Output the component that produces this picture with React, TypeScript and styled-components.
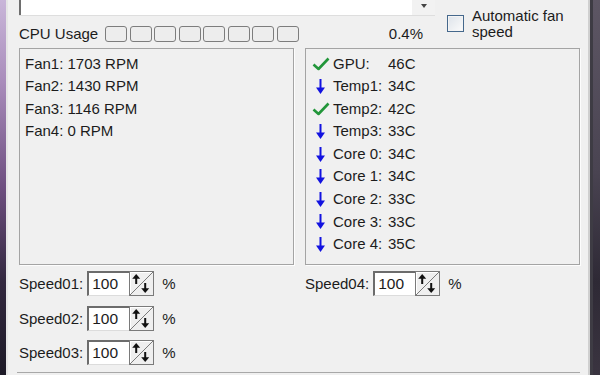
import styled, { createGlobalStyle } from "styled-components";

const GlobalStyle = createGlobalStyle`
  html, body {
    margin: 0;
    padding: 0;
  }
  body {
    width: 600px;
    height: 375px;
    overflow: hidden;
    background: #2a2432;
    font-family: "Liberation Sans", Arial, sans-serif;
    font-size: 15px;
    color: #1c1c1c;
  }
`

const Screen = styled.div`
  display: flex;
  width: 600px;
  height: 375px;
  overflow: hidden;
`
const DesktopLeft = styled.div`
  width: 6px;
  flex: none;
  background: linear-gradient(to bottom, #c9b6d9 0%, #a98cbb 22%, #6e4f80 50%, #33283f 75%, #1d1a27 100%);
`
const DesktopRight = styled.div`
  width: 12px;
  flex: none;
  background:
    linear-gradient(to right, #cfcfcf 0 2px, #3e3c44 2px 5px, transparent 5px),
    linear-gradient(to bottom, #5d5664 0%, #4a4452 45%, #2e2935 75%, #3a3440 100%);
`
const Window = styled.main`
  flex: 1;
  background: #f0f0f0;
  border-left: 2px solid #e6e6e6;
  padding: 0 8px 0 11px;
  box-sizing: border-box;
  display: flex;
  flex-direction: column;
  & > * {
    flex-shrink: 0;
  }
`
const TopArea = styled.section`
  display: grid;
  grid-template-columns: 416px 1fr;
  column-gap: 12px;
`
const LeftTop = styled.div`
  display: flex;
  flex-direction: column;
`
const Combo = styled.div`
  display: flex;
  height: 16px;
  border-bottom: 1px solid #dedede;
  box-sizing: border-box;
`
const ComboField = styled.div`
  flex: 1;
  background: #fff;
  border-left: 2px solid #6e6e6e;
`
const DropButton = styled.div`
  width: 23px;
  background: #f2f2f2;
  display: flex;
  justify-content: center;
  padding-top: 4px;
  box-sizing: border-box;
  &::after {
    content: "";
    width: 0;
    height: 0;
    border-left: 3.5px solid transparent;
    border-right: 3.5px solid transparent;
    border-top: 4px solid #444;
  }
`
const CpuRow = styled.div`
  display: flex;
  align-items: center;
  height: 16px;
  margin-top: 10px;
  line-height: 16px;
`
const Segments = styled.div`
  display: flex;
  gap: 2.5px;
  margin-left: 7px;
  height: 16px;
`
const Segment = styled.span`
  width: 22px;
  height: 16px;
  box-sizing: border-box;
  border: 1.5px solid #7d7d7d;
  border-radius: 3px;
  background: #ededed;
`
const Percent = styled.span`
  margin-left: auto;
  margin-right: 12px;
`
const AutoFan = styled.label`
  display: flex;
  align-items: center;
  gap: 8px;
  padding-top: 5px;
  line-height: 16px;
`
const CheckBox = styled.span`
  width: 17px;
  height: 17px;
  flex: none;
  box-sizing: border-box;
  border: 1.5px solid #45688c;
  background: linear-gradient(135deg, #dde3ea, #fbfbfb);
  box-shadow: inset 0 0 0 1px #f4f4f4;
`
const Panels = styled.section`
  display: grid;
  grid-template-columns: 275px 275px;
  column-gap: 11px;
  margin-top: 6px;
  height: 217px;
`
const Panel = styled.div<{ $padLeft: number }>`
  border: 1px solid #a4a4a4;
  box-shadow: 1px 1px 0 #fdfdfd;
  box-sizing: border-box;
  padding: 3.5px 0 0 ${p => p.$padLeft}px;
  line-height: 22.6px;
`
const SensorRow = styled.div`
  display: flex;
  align-items: center;
  height: 22.6px;
`
const IconCell = styled.span`
  width: 21px;
  flex: none;
  display: flex;
  align-items: center;
`
const SensorName = styled.span`
  width: 55px;
  flex: none;
  white-space: pre;
`
const SpeedArea = styled.section`
  display: grid;
  grid-template-columns: 275px 275px;
  column-gap: 11px;
  margin-top: 6px;
`
const SpeedColumn = styled.div`
  display: flex;
  flex-direction: column;
  gap: 9.5px;
`
const SpeedRow = styled.div`
  display: flex;
  align-items: center;
  height: 25px;
`
const NumBox = styled.div`
  width: 42px;
  height: 25px;
  margin-left: 4px;
  box-sizing: border-box;
  background: #fff;
  border-top: 2px solid #6c6c6c;
  border-left: 2px solid #6c6c6c;
  border-bottom: 1px solid #dcdcdc;
  padding-left: 3px;
  line-height: 21px;
  font-size: 15.5px;
`
const Spinner = styled.div`
  width: 25px;
  height: 25px;
  box-sizing: border-box;
  border: 1px solid #7a7a7a;
  background: #efefef;
  box-shadow: inset 1px 1px 0 #fff;
  display: flex;
`
const PercentSign = styled.span`
  margin-left: 8px;
`
const BottomGroup = styled.div`
  margin: 6.5px 0 0 -2px;
  border-top: 1px solid #a8a8a8;
  box-shadow: 0 1px 0 #fff;
  height: 20px;
`

const Check = () => (
  <svg width="18" height="14" viewBox="0 0 18 14">
    <path d="M1.5 7.5 L6.5 12 L16.5 1.5" fill="none" stroke="#22963a" strokeWidth="2.6" strokeLinejoin="round" />
  </svg>
)
const Down = () => (
  <svg width="9" height="15" viewBox="0 0 9 15" style={{ marginLeft: 4 }}>
    <rect x="3.5" y="0" width="2" height="10" fill="#1212e0" />
    <polygon points="0,8.5 9,8.5 4.5,15" fill="#1212e0" />
  </svg>
)
const SpinGlyph = () => (
  <svg width="23" height="23" viewBox="0 0 23 23">
    <line x1="0" y1="23" x2="23" y2="0" stroke="#7a7a7a" strokeWidth="1" />
    <rect x="5.2" y="5" width="2" height="7" fill="#111" />
    <polygon points="2.2,6.8 10.2,6.8 6.2,2" fill="#111" />
    <rect x="14.2" y="11" width="2" height="7" fill="#111" />
    <polygon points="11.2,16.2 19.2,16.2 15.2,21" fill="#111" />
  </svg>
)

const fans = ["Fan1: 1703 RPM", "Fan2: 1430 RPM", "Fan3: 1146 RPM", "Fan4: 0 RPM"];
const temps = [
  { name: "GPU:", value: "46C", ok: true },
  { name: "Temp1:", value: "34C", ok: false },
  { name: "Temp2:", value: "42C", ok: true },
  { name: "Temp3:", value: "33C", ok: false },
  { name: "Core 0:", value: "34C", ok: false },
  { name: "Core 1:", value: "34C", ok: false },
  { name: "Core 2:", value: "33C", ok: false },
  { name: "Core 3:", value: "33C", ok: false },
  { name: "Core 4:", value: "35C", ok: false },
];

function Speed({ label }: { label: string }) {
  return (
    <SpeedRow>
      <span>{label}</span>
      <NumBox>100</NumBox>
      <Spinner><SpinGlyph /></Spinner>
      <PercentSign>%</PercentSign>
    </SpeedRow>
  )
}

export default function App() {
  return (
    <Screen>
      <GlobalStyle />
      <DesktopLeft />
      <Window>
        <TopArea>
          <LeftTop>
            <Combo>
              <ComboField />
              <DropButton />
            </Combo>
            <CpuRow>
              <span>CPU Usage</span>
              <Segments>
                {Array.from({ length: 8 }).map((_, i) => <Segment key={i} />)}
              </Segments>
              <Percent>0.4%</Percent>
            </CpuRow>
          </LeftTop>
          <AutoFan>
            <CheckBox />
            <span>Automatic fan<br />speed</span>
          </AutoFan>
        </TopArea>
        <Panels>
          <Panel $padLeft={5}>
            {fans.map(f => <div key={f}>{f}</div>)}
          </Panel>
          <Panel $padLeft={6}>
            {temps.map(t => (
              <SensorRow key={t.name}>
                <IconCell>{t.ok ? <Check /> : <Down />}</IconCell>
                <SensorName>{t.name}</SensorName>
                <span>{t.value}</span>
              </SensorRow>
            ))}
          </Panel>
        </Panels>
        <SpeedArea>
          <SpeedColumn>
            <Speed label="Speed01:" />
            <Speed label="Speed02:" />
            <Speed label="Speed03:" />
          </SpeedColumn>
          <SpeedColumn>
            <Speed label="Speed04:" />
          </SpeedColumn>
        </SpeedArea>
        <BottomGroup />
      </Window>
      <DesktopRight />
    </Screen>
  )
}
